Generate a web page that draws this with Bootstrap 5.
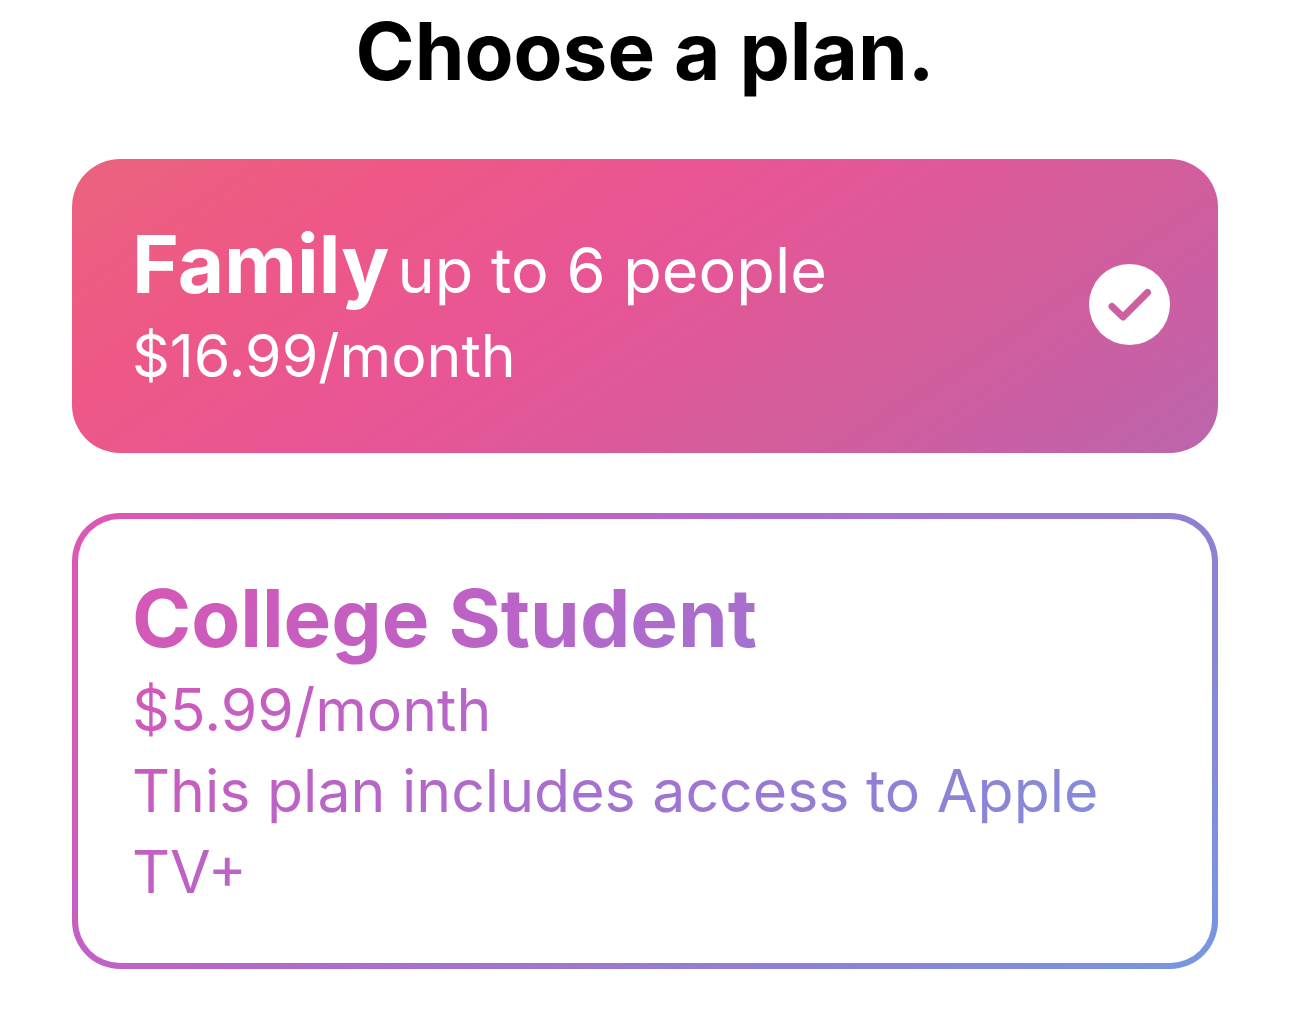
<!DOCTYPE html>
<html lang="en">
<head>
<meta charset="utf-8">
<meta name="viewport" content="width=device-width, initial-scale=1">
<title>Choose a plan</title>
<link href="https://cdn.jsdelivr.net/npm/bootstrap@5.3.0/dist/css/bootstrap.min.css" rel="stylesheet">
<style>
  body { font-family: Inter, "Liberation Sans", sans-serif; background: #fff; color: #000; }
  .plan-page { padding: 0 71px 62px 72px; }
  .plan-title { font-size: 80px; line-height: 102px; font-weight: 700; margin-bottom: 57px; }
  .plan-list { gap: 60px; }
  .plan-option { border-radius: 48px; padding: 54px 48px 57px 60px; cursor: pointer; }
  .plan-name { font-size: 80px; line-height: 102px; font-weight: 700; }
  .plan-note { font-size: 63px; line-height: 1; font-weight: 400; }
  .plan-text { font-size: 59px; line-height: 81px; font-weight: 400; }
  .plan-selected {
    color: #fff;
    background: linear-gradient(146deg, #eb637d 0%, #ee5886 21%, #e85596 45%, #d35d9b 70%, #c95fa4 85%, #bb66ac 100%);
  }
  .plan-outline {
    border: 6px solid transparent;
    padding: 48px 54px 51px 54px;
    background: linear-gradient(#fff, #fff) padding-box,
      linear-gradient(135deg, #de57b2 0%, #c45fc4 28%, #a871cd 50%, #8c82d3 75%, #7797e0 100%) border-box;
  }
  .plan-ink {
    color: transparent;
    background: linear-gradient(135deg, #d857b4 0%, #c060c4 25%, #a372d0 52%, #8c84d6 78%, #7c93de 100%);
    -webkit-background-clip: text;
    background-clip: text;
  }
  .plan-check { width: 81px; height: 81px; }
</style>
<script src="https://cdn.jsdelivr.net/npm/bootstrap@5.3.0/dist/js/bootstrap.bundle.min.js"></script>
</head>
<body>
<main class="plan-page">
  <h1 class="plan-title text-center">Choose a plan.</h1>
  <form class="plan-list d-flex flex-column">
    <div>
      <input class="btn-check" type="radio" name="plan" id="plan-family" checked>
      <label class="plan-option plan-selected d-flex align-items-center justify-content-between" for="plan-family">
        <span>
          <span class="plan-name d-block">Family<span class="plan-note ms-2">up to 6 people</span></span>
          <span class="plan-text d-block">$16.99/month</span>
        </span>
        <svg class="plan-check flex-shrink-0" viewBox="0 0 81 81" aria-hidden="true">
          <circle cx="40.5" cy="40.5" r="40.5" fill="#fff"/>
          <path d="M23 42.500 34 53 58.500 28.500" fill="none" stroke="#cb5fa2" stroke-width="7" stroke-linecap="round" stroke-linejoin="round"/>
        </svg>
      </label>
    </div>
    <div>
      <input class="btn-check" type="radio" name="plan" id="plan-student">
      <label class="plan-option plan-outline d-block" for="plan-student">
        <span class="plan-ink d-block">
          <span class="plan-name d-block">College Student</span>
          <span class="plan-text d-block">$5.99/month</span>
          <span class="plan-text d-block">This plan includes access to Apple TV+</span>
        </span>
      </label>
    </div>
  </form>
</main>
</body>
</html>
